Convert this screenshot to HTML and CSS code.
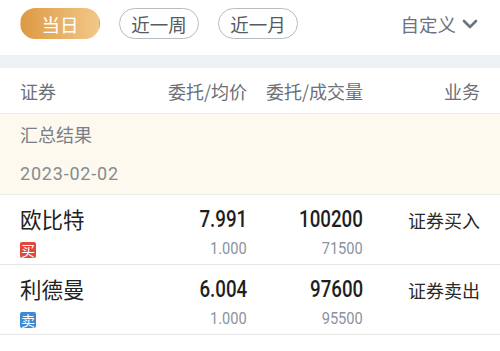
FILE: index.html
```html
<!DOCTYPE html>
<html>
<head>
    <meta charset="utf-8">
    <title>委托查询</title>
    <link rel="stylesheet" href="styles.css">
</head>
<body>
    <div class="tabs">
        <span class="pill active">当日</span>
        <span class="pill">近一周</span>
        <span class="pill">近一月</span>
        <span class="custom">自定义
            <svg width="16" height="10" viewBox="0 0 16 10"><polyline points="2,2 8,8 14,2" fill="none" stroke="#6b7480" stroke-width="2.6" stroke-linecap="round" stroke-linejoin="round"/></svg>
        </span>
    </div>
    <div class="band"></div>

    <div class="grid head">
        <span>证券</span>
        <span class="r">委托/均价</span>
        <span class="r">委托/成交量</span>
        <span class="r">业务</span>
    </div>

    <div class="summary">
        <div class="line">汇总结果</div>
        <div class="line date">2023-02-02</div>
    </div>

    <div class="grid row">
        <div>
            <div class="name">欧比特</div>
            <div class="sub"><span class="tag buy">买</span></div>
        </div>
        <div class="r">
            <div class="num"><span class="nx">7.991</span></div>
            <div class="sub"><span class="nx small">1.000</span></div>
        </div>
        <div class="r">
            <div class="num"><span class="nx">100200</span></div>
            <div class="sub"><span class="nx small">71500</span></div>
        </div>
        <div class="r biz">证券买入</div>
    </div>

    <div class="grid row">
        <div>
            <div class="name">利德曼</div>
            <div class="sub"><span class="tag sell">卖</span></div>
        </div>
        <div class="r">
            <div class="num"><span class="nx">6.004</span></div>
            <div class="sub"><span class="nx small">1.000</span></div>
        </div>
        <div class="r">
            <div class="num"><span class="nx">97600</span></div>
            <div class="sub"><span class="nx small">95500</span></div>
        </div>
        <div class="r biz">证券卖出</div>
    </div>
</body>
</html>
```

FILE: styles.css
```css
body {
    margin: 0;
    background-color: #fff;
    font-family: "Noto Sans CJK SC", "Noto Sans", sans-serif;
    color: #222;
}

.tabs { display: flex; align-items: center; gap: 19px; padding: 8px 20px 16px; }
.pill {
    width: 78px;
    height: 29px;
    border: 1px solid #b8bcc2;
    border-radius: 16px;
    display: flex;
    align-items: center;
    justify-content: center;
    font-size: 18.5px;
    color: #555b63;
}
.pill.active {
    border-color: transparent;
    background: linear-gradient(90deg, #dc9a45, #f2c888);
    color: #fff;
}
.custom {
    margin-left: auto;
    display: flex;
    align-items: center;
    gap: 6px;
    font-size: 18.5px;
    color: #6b7480;
    padding-right: 2px;
}

.band { height: 13px; background-color: #eef1f4; }

.grid {
    display: grid;
    grid-template-columns: 117px 110px 116px 117px;
    padding: 0 20px;
}
.r { text-align: right; }

.head {
    height: 45px;
    align-items: center;
    font-size: 18px;
    color: #6b7079;
    border-bottom: 1px solid #f0ece0;
}

.summary { background-color: #fdf9ee; padding: 0 20px; border-bottom: 1px solid #ebebeb; }
.summary .line { height: 40px; line-height: 40px; font-size: 18px; color: #7b8088; }
.summary .date { font-family: "Roboto", "Noto Sans", sans-serif; font-size: 18px; letter-spacing: 0.8px; color: #868b92; }

.row { padding-top: 10px; box-sizing: border-box; height: 70px; border-bottom: 1px solid #e6e6e6; }
.name { height: 28px; line-height: 28px; font-size: 21.5px; color: #222; }
.num { height: 28px; line-height: 28px; }
.sub { height: 20px; line-height: 20px; margin-top: 4px; }
.nx {
    display: inline-block;
    font-family: "Roboto", "Noto Sans", sans-serif;
    font-size: 24px;
    font-weight: 500;
    color: #1e1e1e;
    transform: scaleX(0.78);
    transform-origin: right center;
}
.nx.small { font-size: 17px; font-weight: 400; color: #8a939e; transform: scaleX(0.86); }
.biz { font-size: 18px; line-height: 28px; color: #2a2a2a; padding-top: 1px; }

.tag {
    display: inline-flex;
    width: 16px;
    height: 16px;
    align-items: center;
    justify-content: center;
    font-size: 14px;
    line-height: 1;
    color: #fff;
    border-radius: 2px;
    vertical-align: middle;
}
.tag.buy { background-color: #e2473b; }
.tag.sell { background-color: #3b8ad9; }
```
